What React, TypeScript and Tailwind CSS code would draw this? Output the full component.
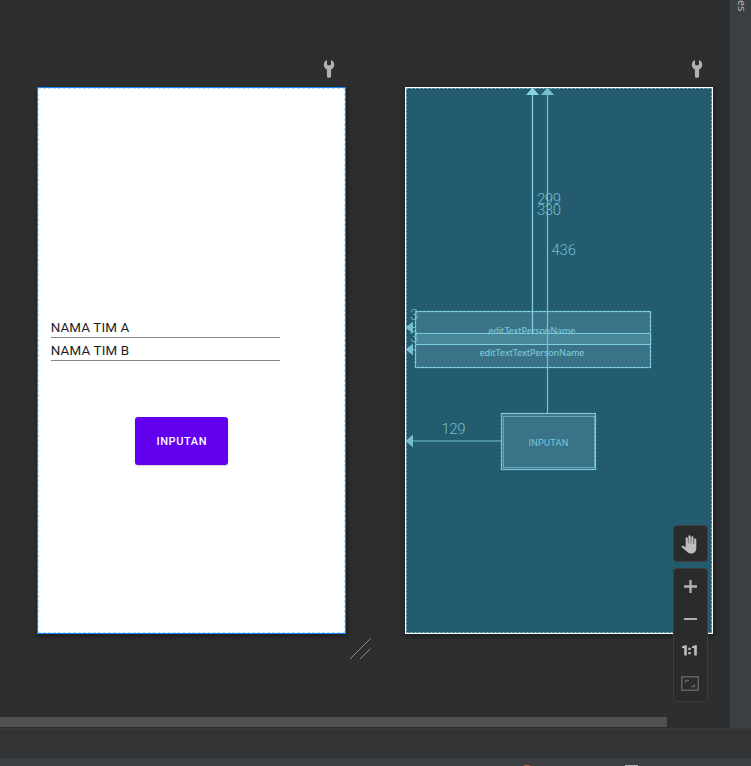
import React from "react";

const mint = "#7cc4d8";

function Wrench() {
  return (
    <svg className="ml-[286px] h-[28px] w-[12px] shrink-0" viewBox="0 0 12 28">
      <path
        d="M4 1A5.200 5.200 0 0 0 .8 5.700C.8 8 2 9.500 3.900 10.500V17a2.100 2.100 0 0 0 4.200 0v-6.500C10 9.500 11.200 8 11.200 5.700A5.200 5.200 0 0 0 8 1V5.200L7.200 6.200H4.800L4 5.200Z"
        fill="#afb1b3"
      />
    </svg>
  );
}

function Field({ text }: { text: string }) {
  return (
    <div className="flex h-[23px] w-[229px] items-start border-b border-[#858585] pt-[3px]">
      <svg className="h-[18px] w-[80px]" viewBox="0 0 80 18">
        <text x="-0.3" y="14" textLength="78.500" fontSize="13.400" fontFamily="Roboto, sans-serif" fill="#1c1c1c">
          {text}
        </text>
      </svg>
    </div>
  );
}

function DesignScreen() {
  return (
    <div className="flex h-[547px] w-[309px] flex-col border border-[#1886f7] bg-white shadow-[1px_2px_5px_1px_rgba(0,0,0,0.35)]">
      <div className="flex grow flex-col border border-dashed border-[#b9dcf8] pt-[226px] pl-[12px]">
        <Field text="NAMA TIM A" />
        <Field text="NAMA TIM B" />
        <div className="mt-[56px] ml-[83.500px] flex h-[47.500px] w-[93.500px] items-center justify-center rounded-[3px] bg-[#6200ee] pt-[3px] pl-[1px] font-[Roboto,sans-serif] text-[11px] font-medium tracking-[0.600px] text-white shadow-[0_1px_2px_rgba(0,0,0,0.2)]">
          INPUTAN
        </div>
      </div>
    </div>
  );
}

function Box({ x, y, w, h, fill }: { x: number; y: number; w: number; h: number; fill: string }) {
  return (
    <g>
      <rect x={x + 0.5} y={y + 0.5} width={w - 1} height={h - 1} fill={fill} stroke="#65b1c6" strokeWidth="1.300" />
      <rect x={x + 0.5} y={y + 0.5} width={w - 1} height={h - 1} fill="none" stroke="#91dced" strokeDasharray="2 2" />
    </g>
  );
}

function BlueprintScreen() {
  return (
    <div className="h-[547px] w-[308px] bg-[#235c6e] shadow-[1px_2px_5px_1px_rgba(0,0,0,0.35)]">
      <svg className="h-full w-full" viewBox="405 87 308 547" fontFamily="Roboto, sans-serif" fill={mint}>
        <rect x="406.500" y="88.500" width="305" height="544" fill="none" stroke="#73a9b6" strokeDasharray="2 2" />
        <rect x="405.500" y="87.500" width="307" height="546" fill="none" stroke="#fff" strokeWidth="1.200" />

        <Box x={415} y={311} w={236} h={34} fill="#3a7387" />
        <text x="488.500" y="334" fontSize="9" fontWeight="500" textLength="87" fontFamily="'Noto Sans', sans-serif">editTextPersonName</text>
        <path d="M532.500 94V333" stroke="#80d0e3" strokeWidth="1.300" />
        <Box x={415} y={333} w={236} h={35} fill="#3a7387" />
        <rect x="416" y="334" width="234" height="10" fill="#48869a" />
        <path d="M416 344.500H650" stroke="#80cfe1" />
        <text x="479.500" y="356" fontSize="9" fontWeight="500" textLength="105" fontFamily="'Noto Sans', sans-serif">editTextTextPersonName</text>

        <Box x={501} y={413} w={95} h={57} fill="#3a7387" />
        <rect x="503.500" y="416.500" width="91" height="51" fill="none" stroke="#65a9bd" />
        <text x="528.500" y="446" fontSize="9.300" textLength="40">INPUTAN</text>

        <path d="M547.500 94V413M413 441H501M412 327.500H416M412 349.500H416" stroke="#74c0d4" strokeWidth="1.200" fill="none" />
        <path d="M532.500 87.500L539 95H526Z" fill="#87d2e5" />
        <path d="M547.500 87.500L554 95H541ZM405.500 441L413 434.500V447.500ZM405.500 327.500L413 321.500V333.500ZM405.500 349.500L413 343.500V355.500Z" fill="#75bdd1" />

        <g fontSize="15" fontWeight="300" fill="#76bdd0">
          <text x="537" y="204" textLength="24">299</text>
          <text x="537" y="215" textLength="24">330</text>
          <text x="551.500" y="255" textLength="24.500">436</text>
          <text x="441.500" y="434" textLength="24">129</text>
          <text x="410" y="320">3</text>
          <text x="410" y="342">3</text>
        </g>
      </svg>
    </div>
  );
}

function HandIcon() {
  return (
    <svg width="18" height="19" viewBox="0 0 18 19" fill="#bebebe">
      <path d="M4.700 10V3.300a1 1 0 0 1 2.200 0V8.500h.5V1.500a1.100 1.100 0 0 1 2.300 0v7h.5V2.300a1.100 1.100 0 0 1 2.300 0V9h.6V4.600a1.100 1.100 0 0 1 2.200 0V13c0 3.500-2 5.500-5.200 5.500-2.200 0-3.600-.8-4.800-2.400L.6 11.900c-.4-.9.7-1.600 1.700-1.100L4.700 12.300Z" />
    </svg>
  );
}

function ZoomTools() {
  return (
    <div className="absolute top-[525px] left-[673px] flex w-[34.500px] flex-col gap-[6px]">
      <div className="flex h-[37px] items-center justify-center rounded-[4px] border border-[#3d3d3d] bg-[#2b2b2b] pt-[1px]">
        <HandIcon />
      </div>
      <div className="flex h-[134px] flex-col items-start rounded-[4px] border border-[#3d3d3d] bg-[#2b2b2b] pt-[11px] pl-[7px]">
        <svg className="ml-[2.500px]" width="13" height="13" viewBox="0 0 13 13">
          <path d="M6.500 0V13M0 6.500H13" stroke="#afb1b3" strokeWidth="2.300" />
        </svg>
        <div className="mt-[25px] ml-[2.500px] h-[2px] w-[13px] bg-[#afb1b3]" />
        <svg className="mt-[25px] ml-[1px]" width="15" height="11" viewBox="0 0 15 11" fill="#bdbdbd">
          <path d="M0 1.500L3 .3H4.800V10.500H2.200V3H0ZM6.300 2.700H8.700V5H6.300ZM6.300 7H8.700V9.300H6.300ZM10 1.500L13 .3H14.800V10.500H12.200V3H10Z" />
        </svg>
        <svg className="mt-[20px]" width="18" height="15" viewBox="0 0 18 15" fill="none" stroke="#606162">
          <rect x="0.750" y="0.750" width="16.500" height="13.500" strokeWidth="1.500" />
          <path d="M4.500 7V4.500H8M13.500 8V10.500H10" strokeWidth="1.300" />
        </svg>
      </div>
    </div>
  );
}

export default function App() {
  return (
    <div className="flex h-[766px] w-[751px] flex-col overflow-hidden bg-[#3c3f41]">
      <div className="flex h-[728px] shrink-0">
        <main className="relative flex w-[730px] flex-col bg-[#2d2e30]">
          <div className="flex h-[634px] gap-[59px] pt-[59px] pl-[37px]">
            <section className="flex w-[309px] flex-col">
              <Wrench />
              <DesignScreen />
            </section>
            <section className="flex w-[309px] flex-col">
              <Wrench />
              <BlueprintScreen />
            </section>
          </div>
          <svg className="mt-[4px] ml-[350px] shrink-0" width="21" height="21" viewBox="0 0 21 21">
            <path d="M0 21L20.500 .5M10 21L20.500 10.500" stroke="#8b8c8d" fill="none" />
          </svg>
          <div className="mt-[58px] h-[10px] w-[667px] bg-[#4f5051]" />
          <ZoomTools />
        </main>
        <aside className="flex w-[21px] items-start justify-center bg-[#3c3f41]">
          <div className="ml-[2px] font-['Open_Sans',sans-serif] text-[11px] leading-[14px] text-[#bbbbbb] [writing-mode:vertical-rl]">
            es
          </div>
        </aside>
      </div>
      <div className="h-[30px] shrink-0 border-t-2 border-[#39393a] bg-[#323334]" />
      <footer className="flex h-[8px] items-end overflow-hidden bg-[#3c3f41]">
        <div className="mb-[-9px] ml-[521px] h-[10px] w-[12px] rounded-full bg-[#c75450]" />
        <div className="ml-[92px] h-[1px] w-[13px] bg-[#afb1b3]" />
      </footer>
    </div>
  );
}
